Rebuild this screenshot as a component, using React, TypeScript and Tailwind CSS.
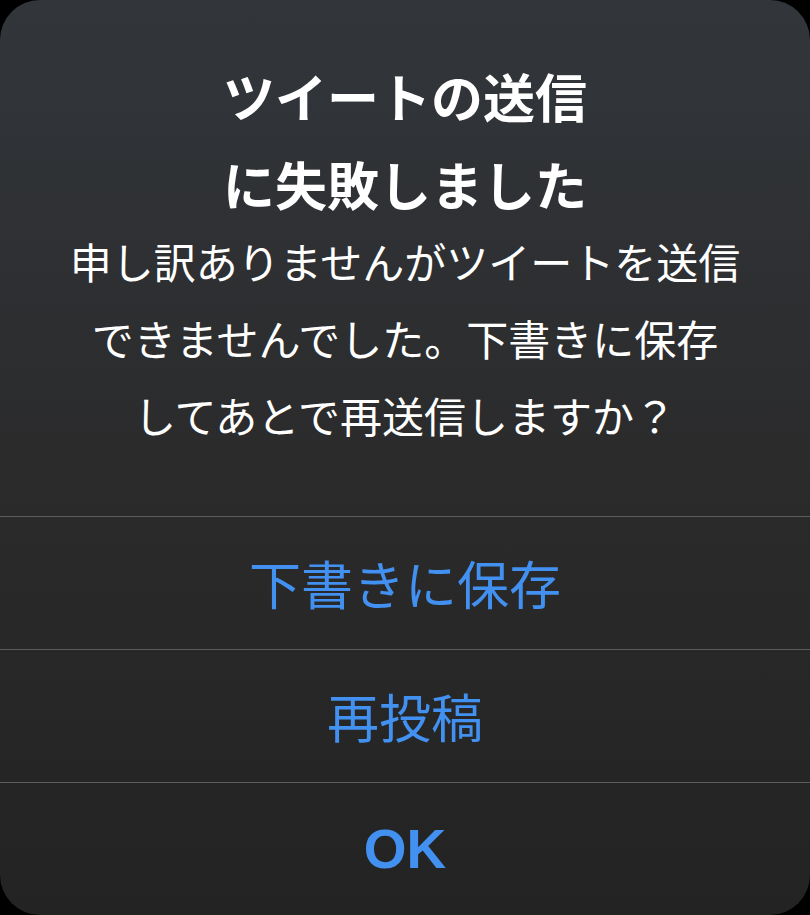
import React from 'react';

const jp = { fontFamily: '"Noto Sans CJK JP", "Noto Sans", sans-serif' };

const actions = [
  { label: '下書きに保存', bold: false },
  { label: '再投稿', bold: false },
  { label: 'OK', bold: true },
];

export default function App() {
  return (
    <div className="w-[810px] h-[915px] bg-black overflow-hidden" style={jp}>
      {/* alert sheet */}
      <div className="h-full w-full rounded-[40px] bg-gradient-to-b from-[#32363b] via-[#2b2b2c] to-[#232323] flex flex-col text-white">
        <div className="flex flex-col items-center pt-[52px] pb-[63px]">
          <h1 className="text-[52px] leading-[88px] font-bold text-center whitespace-nowrap">
            ツイートの送信
            <br />
            に失敗しました
          </h1>
          <p className="mt-[-6px] text-[42px] leading-[77px] text-center whitespace-nowrap">
            申し訳ありませんがツイートを送信
            <br />
            できませんでした。下書きに保存
            <br />
            してあとで再送信しますか？
          </p>
        </div>

        {actions.map((a) => (
          <button
            key={a.label}
            className={`h-[133px] w-full border-t border-[#5c5c5c] flex items-center justify-center text-[#4290f0] ${
              a.bold ? 'text-[55px] font-bold' : 'text-[52px]'
            }`}
            style={a.bold ? { fontFamily: '"Liberation Sans", Arial, sans-serif' } : undefined}
          >
            {a.label}
          </button>
        ))}
      </div>
    </div>
  );
}
